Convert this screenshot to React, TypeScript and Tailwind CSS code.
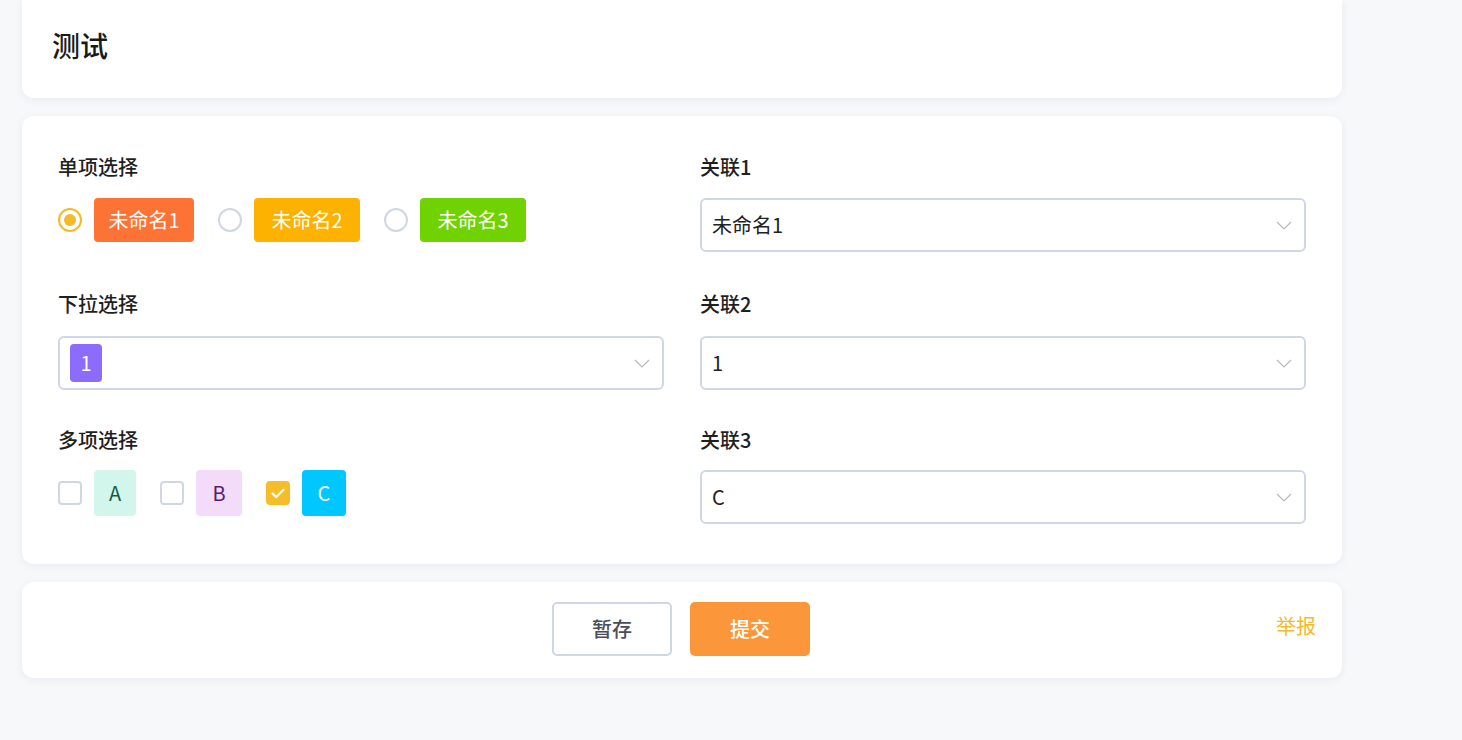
import React from "react";

const font = { fontFamily: '"Noto Sans CJK SC", "Noto Sans", sans-serif' };

function Chevron() {
  return (
    <svg width="16" height="9" viewBox="0 0 16 9" fill="none" className="shrink-0">
      <path d="M1 1l7 7 7-7" stroke="#b5b9c0" strokeWidth="1.2" />
    </svg>
  );
}

function Select({ children }: { children: React.ReactNode }) {
  return (
    <div className="flex h-[54px] w-full items-center justify-between rounded-[6px] border-2 border-[#cfd7e3] bg-white pl-[10px] pr-[12px]">
      <div className="flex items-center text-[20px] text-[#222]">{children}</div>
      <Chevron />
    </div>
  );
}

function Label({ children, mb }: { children: React.ReactNode; mb: string }) {
  return <div className={`h-[28px] text-[20px] font-medium leading-[28px] text-[#1f1f1f] ${mb}`}>{children}</div>;
}

function Radio({ checked, className = "" }: { checked?: boolean; className?: string }) {
  return checked ? (
    <span className={`flex h-[24px] w-[24px] shrink-0 items-center justify-center rounded-full border-2 border-[#f5b92a] bg-white ${className}`}>
      <span className="h-[12px] w-[12px] rounded-full bg-[#f5b92a]" />
    </span>
  ) : (
    <span className={`block h-[24px] w-[24px] shrink-0 rounded-full border-2 border-[#cfd7e3] bg-white ${className}`} />
  );
}

function Check({ checked, className = "" }: { checked?: boolean; className?: string }) {
  return checked ? (
    <span className={`flex h-[24px] w-[24px] shrink-0 items-center justify-center rounded-[4px] bg-[#f5bd28] ${className}`}>
      <svg width="14" height="11" viewBox="0 0 14 11" fill="none">
        <path d="M1.5 5.5l3.8 3.6L12.5 1.8" stroke="#fff" strokeWidth="2.2" strokeLinecap="round" strokeLinejoin="round" />
      </svg>
    </span>
  ) : (
    <span className={`block h-[24px] w-[24px] shrink-0 rounded-[4px] border-2 border-[#cfd7e3] bg-white ${className}`} />
  );
}

export default function App() {
  return (
    <div className="min-h-[740px] w-full bg-[#f7f8fa]" style={font}>
      <div className="w-[1320px] pl-[22px] box-content">
        {/* heading card */}
        <div className="flex h-[98px] items-center rounded-b-[12px] bg-white px-[30px] pb-[8px] shadow-[0_2px_10px_rgba(20,30,60,0.06)]">
          <h1 className="text-[28px] font-medium text-[#1a1a1a]">测试</h1>
        </div>

        {/* form card */}
        <div className="mt-[18px] rounded-[12px] bg-white px-[36px] pb-[40px] pt-[37px] shadow-[0_2px_10px_rgba(20,30,60,0.06)]">
          <div className="grid grid-cols-2 gap-x-[36px]">
            <div>
              <Label mb="mb-[17px]">单项选择</Label>
              <div className="flex items-center">
                <Radio checked />
                <span className="ml-[12px] flex h-[44px] w-[100px] items-center justify-center rounded-[4px] bg-[#fd7235] text-[20px] text-white">未命名1</span>
                <Radio className="ml-[24px]" />
                <span className="ml-[12px] flex h-[44px] w-[106px] items-center justify-center rounded-[4px] bg-[#fdb100] text-[20px] text-white">未命名2</span>
                <Radio className="ml-[24px]" />
                <span className="ml-[12px] flex h-[44px] w-[106px] items-center justify-center rounded-[4px] bg-[#70d200] text-[20px] text-white">未命名3</span>
              </div>
            </div>
            <div>
              <Label mb="mb-[17px]">关联1</Label>
              <Select>未命名1</Select>
            </div>
          </div>

          <div className="mt-[38px] grid grid-cols-2 gap-x-[36px]">
            <div>
              <Label mb="mb-[18px]">下拉选择</Label>
              <Select>
                <span className="flex h-[38px] w-[32px] items-center justify-center rounded-[4px] bg-[#8b6cfd] text-[20px] text-white">1</span>
              </Select>
            </div>
            <div>
              <Label mb="mb-[18px]">关联2</Label>
              <Select>1</Select>
            </div>
          </div>

          <div className="mt-[36px] grid grid-cols-2 gap-x-[36px]">
            <div>
              <Label mb="mb-[16px]">多项选择</Label>
              <div className="flex items-center">
                <Check />
                <span className="ml-[12px] flex h-[46px] w-[42px] items-center justify-center rounded-[4px] bg-[#d2f6ec] text-[20px] text-[#175a44]">A</span>
                <Check className="ml-[24px]" />
                <span className="ml-[12px] flex h-[46px] w-[46px] items-center justify-center rounded-[4px] bg-[#f3dcfa] text-[20px] text-[#5b1b6c]">B</span>
                <Check checked className="ml-[24px]" />
                <span className="ml-[12px] flex h-[46px] w-[44px] items-center justify-center rounded-[4px] bg-[#00c7ff] text-[20px] text-white">C</span>
              </div>
            </div>
            <div>
              <Label mb="mb-[16px]">关联3</Label>
              <Select>C</Select>
            </div>
          </div>
        </div>

        {/* action card */}
        <div className="relative mt-[18px] flex h-[96px] items-center justify-center gap-[18px] rounded-[12px] bg-white pb-[2px] pr-[2px] shadow-[0_2px_10px_rgba(20,30,60,0.06)]">
          <button className="h-[54px] w-[120px] rounded-[5px] border-2 border-[#cfd7e3] bg-white text-[20px] font-medium text-[#4a4f57]">暂存</button>
          <button className="h-[54px] w-[120px] rounded-[5px] bg-[#fb973a] text-[20px] font-medium text-white">提交</button>
          <span className="absolute right-[26px] top-[30px] text-[20px] leading-[28px] text-[#f5b92a]">举报</span>
        </div>
      </div>
    </div>
  );
}
